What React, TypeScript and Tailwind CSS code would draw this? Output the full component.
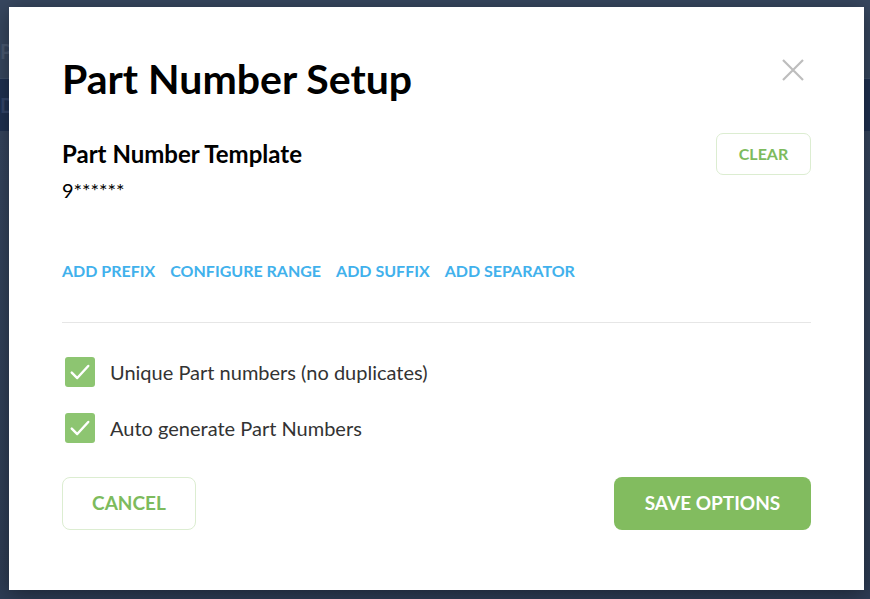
import React, { useState } from 'react';

const font = { fontFamily: 'Lato, "Liberation Sans", sans-serif' };

function Check({ checked, onClick }: { checked: boolean; onClick: () => void }) {
  return (
    <button
      onClick={onClick}
      className={`flex h-[30px] w-[30px] shrink-0 items-center justify-center rounded-[3px] ${
        checked ? 'bg-[#8dc571]' : 'border-2 border-[#cfd8cb] bg-white'
      }`}
    >
      {checked && (
        <svg width="22" height="22" viewBox="0 0 20 20" fill="none">
          <path d="M2.5 10.5l5 5L17.5 4.5" stroke="white" strokeWidth="2.2" strokeLinecap="round" strokeLinejoin="round" />
        </svg>
      )}
    </button>
  );
}

export default function App() {
  const [unique, setUnique] = useState(true);
  const [autoGen, setAutoGen] = useState(true);

  const links = ['ADD PREFIX', 'CONFIGURE RANGE', 'ADD SUFFIX', 'ADD SEPARATOR'];

  return (
    <div className="relative h-[599px] w-[870px] overflow-hidden bg-[#37475f]" style={font}>
      {/* page behind the backdrop */}
      <div className="flex h-full flex-col">
        <div className="flex h-[79px] items-end border-b border-[#3f5069] pb-3">
          <span className="text-[20px] font-bold text-[#4a5a72]">P</span>
        </div>
        <div className="flex h-[52px] items-center bg-[#1f3151]">
          <span className="text-[20px] font-bold text-[#34466a]">D</span>
        </div>
        <div className="flex-1 bg-gradient-to-b from-[#35455e] to-[#2e3d55]" />
      </div>

      {/* modal */}
      <div className="absolute left-[9px] top-[7px] flex h-[583px] w-[855px] flex-col bg-white px-[53px] pt-[48px] shadow-[0_4px_20px_rgba(0,0,0,0.4)]">
        <div className="flex items-start justify-between">
          <h1 className="text-[41px] font-bold leading-[48px] text-black">Part Number Setup</h1>
          <button className="mr-[7px] mt-[4px] text-[#bdbdbd]">
            <svg width="22" height="22" viewBox="0 0 22 22" fill="none">
              <path d="M1 1l20 20M21 1L1 21" stroke="currentColor" strokeWidth="2.2" />
            </svg>
          </button>
        </div>

        <div className="mt-[37px] flex items-start justify-between">
          <div>
            <div className="text-[24px] font-bold leading-[28px] text-black">Part Number Template</div>
            <div className="mt-[10px] text-[20px] leading-[24px] text-black">9******</div>
          </div>
          <button className="mt-[-7px] h-[42px] w-[95px] rounded-[7px] border border-[#dcedd1] text-[16px] font-bold text-[#7dbb5d]">
            CLEAR
          </button>
        </div>

        <div className="mt-[59px] flex gap-[15px]">
          {links.map((l) => (
            <button key={l} className="text-[16px] font-bold leading-[20px] text-[#41b1ec]">
              {l}
            </button>
          ))}
        </div>

        <div className="mt-[41px] h-px w-full bg-[#e6e6e6]" />

        <div className="mt-[34px] flex flex-col gap-[26px] pl-[3px]">
          <label className="flex h-[30px] items-center gap-[15px]">
            <Check checked={unique} onClick={() => setUnique(!unique)} />
            <span className="text-[20px] leading-[30px] text-[#333333]">Unique Part numbers (no duplicates)</span>
          </label>
          <label className="flex h-[30px] items-center gap-[15px]">
            <Check checked={autoGen} onClick={() => setAutoGen(!autoGen)} />
            <span className="text-[20px] leading-[30px] text-[#333333]">Auto generate Part Numbers</span>
          </label>
        </div>

        <div className="mt-[34px] flex justify-between">
          <button className="h-[53px] w-[134px] rounded-[8px] border border-[#dcedd1] text-[19px] font-bold text-[#7dbb5d]">
            CANCEL
          </button>
          <button className="h-[53px] w-[197px] rounded-[8px] bg-[#82bc5f] text-[19px] font-bold text-white">
            SAVE OPTIONS
          </button>
        </div>
      </div>
    </div>
  );
}
